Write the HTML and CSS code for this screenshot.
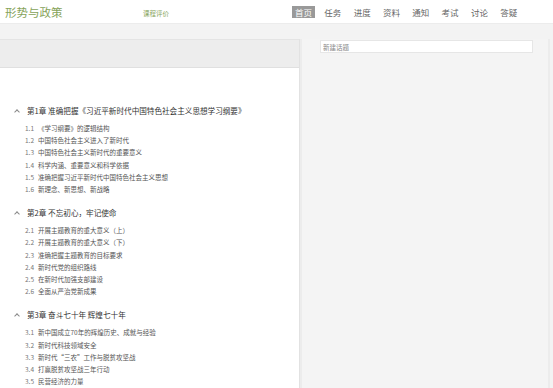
FILE: index.html
```html
<!DOCTYPE html>
<html lang="zh-CN">
<head>
    <meta charset="UTF-8">
    <meta name="viewport" content="width=device-width, initial-scale=1.0">
    <title>形势与政策</title>
    <link rel="stylesheet" href="styles.css">
</head>
<body>
    <header class="topbar">
        <div class="brand">形势与政策</div>
        <a class="rate-link" href="#">课程评价</a>
        <nav class="nav">
            <a class="nav-item active" href="#">首页</a>
            <a class="nav-item" href="#">任务</a>
            <a class="nav-item" href="#">进度</a>
            <a class="nav-item" href="#">资料</a>
            <a class="nav-item" href="#">通知</a>
            <a class="nav-item" href="#">考试</a>
            <a class="nav-item" href="#">讨论</a>
            <a class="nav-item" href="#">答疑</a>
        </nav>
    </header>

    <div class="layout">
        <section class="course">
            <div class="course-head"></div>
            <div class="outline">
                <div class="chapter">
                    <div class="chapter-title"><span class="caret"></span>第1章 准确把握《习近平新时代中国特色社会主义思想学习纲要》</div>
                    <ul class="lessons">
                        <li><span class="num">1.1</span>《学习纲要》的逻辑结构</li>
                        <li><span class="num">1.2</span>中国特色社会主义进入了新时代</li>
                        <li><span class="num">1.3</span>中国特色社会主义新时代的重要意义</li>
                        <li><span class="num">1.4</span>科学内涵、重要意义和科学依据</li>
                        <li><span class="num">1.5</span>准确把握习近平新时代中国特色社会主义思想</li>
                        <li><span class="num">1.6</span>新理念、新思想、新战略</li>
                    </ul>
                </div>
                <div class="chapter">
                    <div class="chapter-title"><span class="caret"></span>第2章 不忘初心，牢记使命</div>
                    <ul class="lessons">
                        <li><span class="num">2.1</span>开展主题教育的重大意义（上）</li>
                        <li><span class="num">2.2</span>开展主题教育的重大意义（下）</li>
                        <li><span class="num">2.3</span>准确把握主题教育的目标要求</li>
                        <li><span class="num">2.4</span>新时代党的组织路线</li>
                        <li><span class="num">2.5</span>在新时代加强支部建设</li>
                        <li><span class="num">2.6</span>全面从严治党新成果</li>
                    </ul>
                </div>
                <div class="chapter">
                    <div class="chapter-title"><span class="caret"></span>第3章 奋斗七十年 辉煌七十年</div>
                    <ul class="lessons">
                        <li><span class="num">3.1</span>新中国成立70年的辉煌历史、成就与经验</li>
                        <li><span class="num">3.2</span>新时代科技领域安全</li>
                        <li><span class="num">3.3</span>新时代“三农”工作与脱贫攻坚战</li>
                        <li><span class="num">3.4</span>打赢脱贫攻坚战三年行动</li>
                        <li><span class="num">3.5</span>民营经济的力量</li>
                    </ul>
                </div>
            </div>
        </section>

        <aside class="sidebar">
            <input class="topic-input" type="text" placeholder="新建话题">
        </aside>
    </div>
</body>
</html>
```

FILE: styles.css
```css
body {
    margin: 0;
    font-family: "Noto Sans CJK SC", "Noto Sans", sans-serif;
    background-color: #f3f3f3;
    color: #333;
}

a {
    text-decoration: none;
}

.topbar {
    display: flex;
    align-items: center;
    height: 23px;
    padding-left: 5px;
    background-color: #fff;
    border-bottom: 1px solid #ececec;
    white-space: nowrap;
}

.brand {
    flex-shrink: 0;
    width: 138px;
    font-size: 11.5px;
    line-height: 14px;
    color: #86a35a;
}

.rate-link {
    flex-shrink: 0;
    font-size: 6.5px;
    color: #86a35a;
    margin-top: 2px;
}

.nav {
    display: flex;
    flex-shrink: 0;
    margin-left: 123px;
}

.nav-item {
    flex-shrink: 0;
    padding: 0 3px;
    margin-right: 6.3px;
    font-size: 8.5px;
    line-height: 12px;
    color: #666;
}

.nav-item.active {
    background-color: #999;
    color: #fff;
}

.layout {
    display: grid;
    grid-template-columns: 300px 250px;
    padding-top: 15px;
}

.course {
    background-color: #fff;
    border-right: 1px solid #e2e2e2;
    min-height: 360px;
}

.course-head {
    height: 27px;
    background-color: #ededed;
    border-top: 1px solid #e4e4e4;
    border-bottom: 1px solid #e0e0e0;
}

.outline {
    padding: 36px 0 0 14px;
}

.chapter {
    margin-bottom: 11px;
}

.chapter-title {
    display: flex;
    align-items: center;
    font-size: 7.6px;
    line-height: 14px;
    color: #333;
}

.caret {
    width: 3px;
    height: 3px;
    margin: 2px 8px 0 1px;
    border-left: 1px solid #888;
    border-top: 1px solid #888;
    transform: rotate(45deg);
}

.lessons {
    list-style: none;
    margin: 4px 0 0 0;
    padding-left: 11px;
}

.lessons li {
    font-size: 6.5px;
    line-height: 12.2px;
    color: #555;
}

.num {
    display: inline-block;
    width: 13px;
    color: #777;
}

.sidebar {
    background-color: #f4f4f4;
    border-left: 2px solid #ececec;
    border-right: 2px solid #ececec;
    padding: 1px 15px 0 18px;
}

.topic-input {
    display: block;
    box-sizing: border-box;
    width: 100%;
    height: 13px;
    padding: 0 2px;
    border: 1px solid #e6e6e6;
    background-color: #fff;
    font-family: "Noto Sans CJK SC", sans-serif;
    font-size: 6.5px;
    outline: none;
}

.topic-input::placeholder {
    color: #888;
}
```
